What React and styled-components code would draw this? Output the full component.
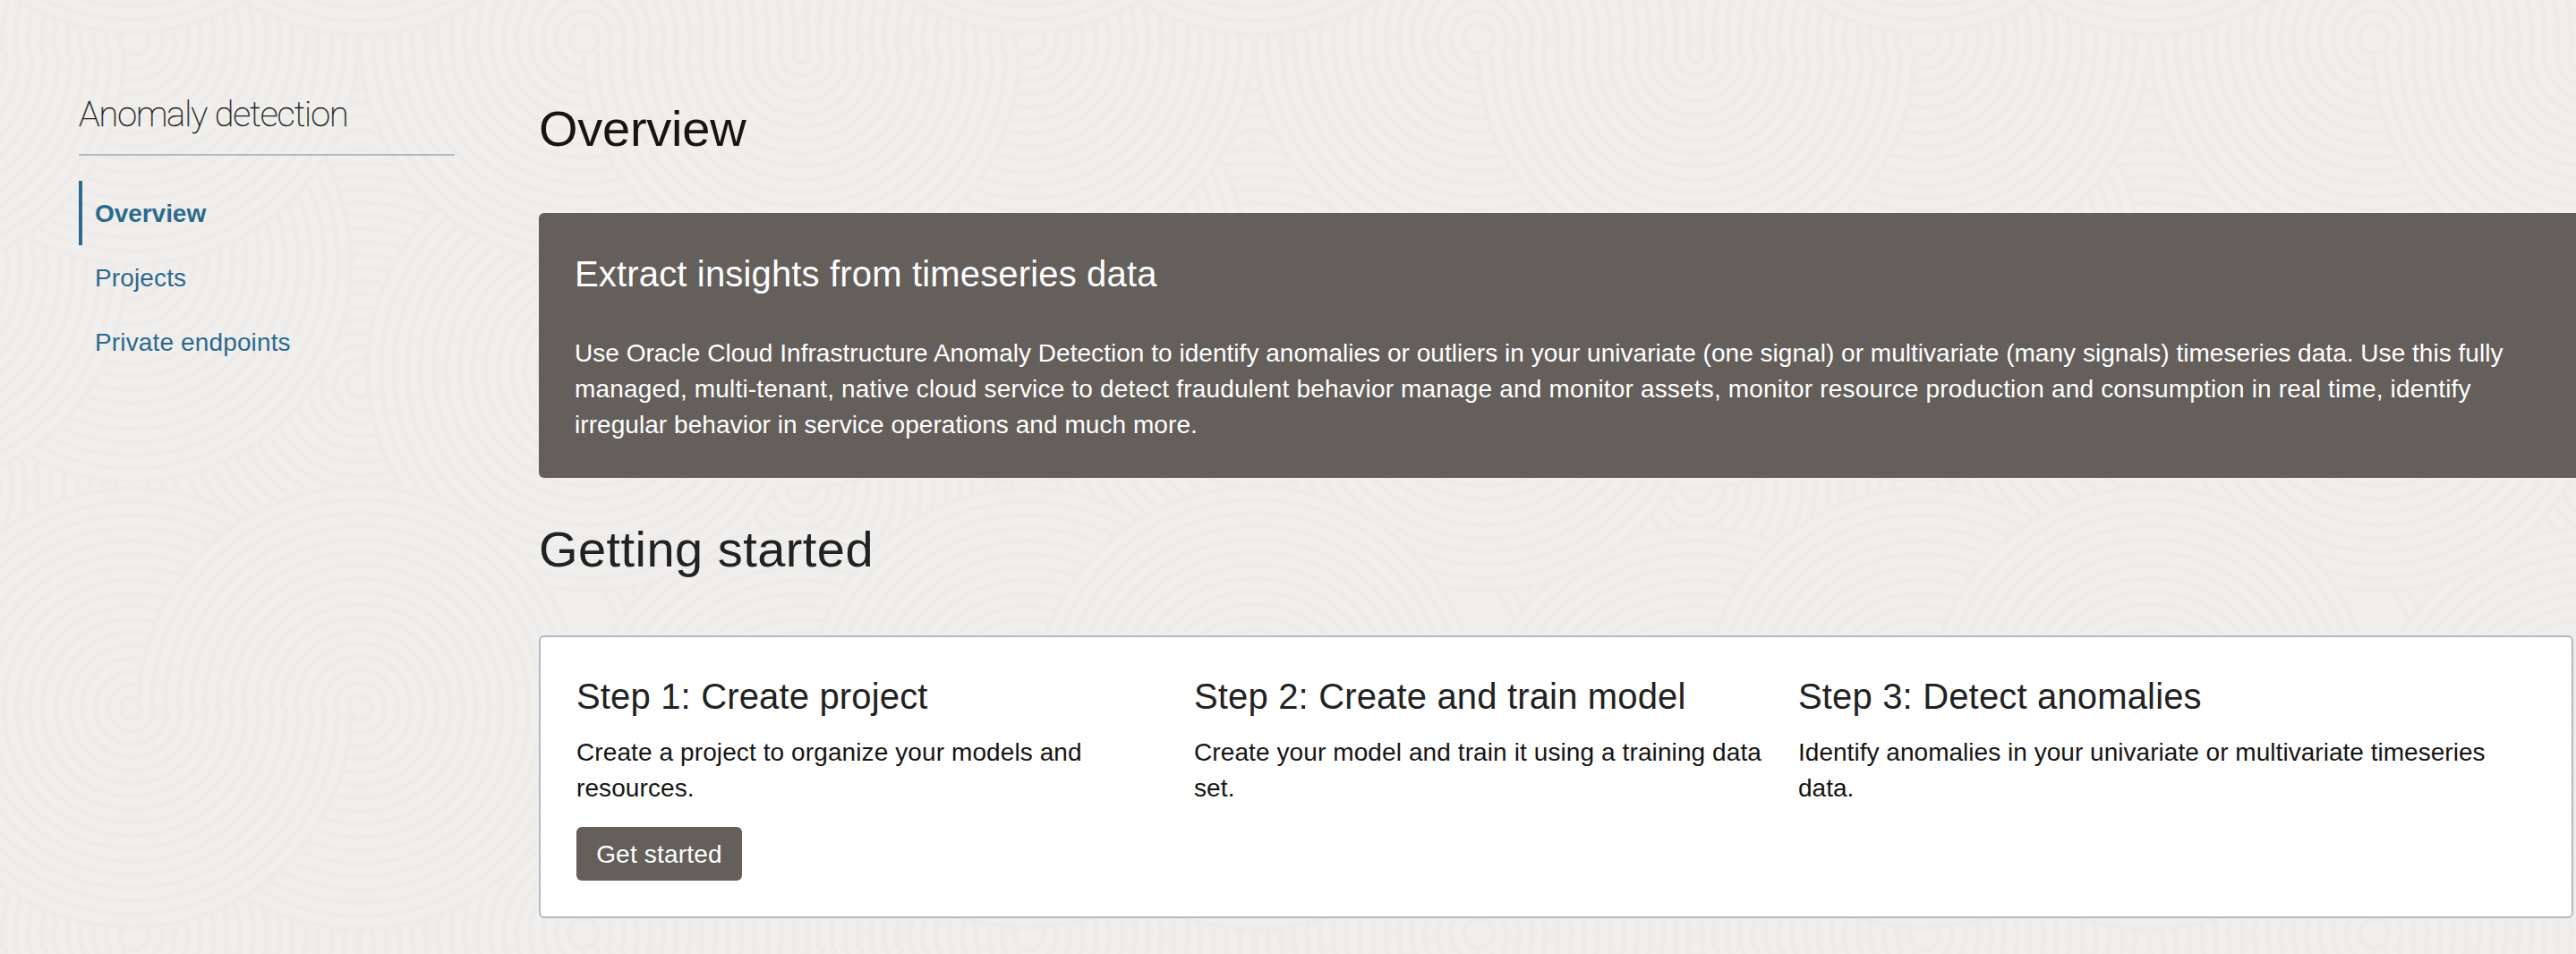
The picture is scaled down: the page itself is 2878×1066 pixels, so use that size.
import React from "react";
import styled, { createGlobalStyle } from "styled-components";

const TILE = 1000;
const PAPER = "#f0efed";

const GlobalStyle = createGlobalStyle`
  *, *::before, *::after { box-sizing: border-box; }
  body {
    margin: 0;
    background: ${PAPER};
    font-family: "Liberation Sans", Arial, sans-serif;
  }
`;

const Page = styled.div`
  position: relative;
  z-index: 0;
  display: flex;
  align-items: flex-start;
  gap: 94px;
  height: 1066px;
  padding-left: 88px;
  overflow: hidden;
`;

const Texture = styled.svg`
  position: absolute;
  inset: 0;
  z-index: -1;
  width: 100%;
  height: 100%;
`;

const Sidebar = styled.aside`
  flex: 0 0 420px;
  padding-top: 104px;
`;

const SidebarTitle = styled.h2`
  margin: 0 0 28px;
  padding-bottom: 20px;
  border-bottom: 2px solid #b5b9c3;
  color: #222;
  font: 100 39.5px/48px Roboto, sans-serif;
  letter-spacing: -1px;
  -webkit-text-stroke: 0.4px #222;
`;

const Nav = styled.nav`
  display: flex;
  flex-direction: column;
`;

const NavItem = styled.a`
  display: flex;
  align-items: center;
  height: 72px;
  padding: 2px 0 0 14px;
  border-left: 4px solid ${(p) => (p.$active ? "#2c6a8d" : "transparent")};
  color: #2c6a8d;
  font-size: 28px;
  font-weight: ${(p) => (p.$active ? 700 : 400)};
  letter-spacing: ${(p) => (p.$active ? "-0.05px" : "0.14px")};
  text-decoration: none;
`;

const Main = styled.main`
  flex: 1;
  min-width: 0;
  padding-top: 112px;
`;

const SectionHeading = styled.h1`
  margin: ${(p) => (p.$spaced ? "48px 0 64px" : "0 0 62px")};
  color: ${(p) => (p.$spaced ? "#222" : "#161513")};
  font-size: 56px;
  font-weight: 400;
  line-height: 64px;
  letter-spacing: ${(p) => (p.$spaced ? "0.45px" : "-0.25px")};
`;

const Banner = styled.section`
  padding: 44px 40px 39px;
  border-radius: 6px 0 0 6px;
  background: #645f5b;
  color: #fff;
`;

const CardTitle = styled.h3`
  margin: 0 0 ${(p) => p.$gap}px;
  font-size: 40px;
  font-weight: 400;
  line-height: 48px;
  letter-spacing: 0.16px;
`;

const Copy = styled.p`
  margin: 0;
  font-size: 28px;
  line-height: 40px;
  letter-spacing: ${(p) => p.$tracking ?? 0.1}px;
`;

const Line = styled.span`
  display: block;
  white-space: nowrap;
  letter-spacing: ${(p) => p.$tracking}px;
`;

const Steps = styled.section`
  display: grid;
  grid-template-columns: 690px 675px 1fr;
  margin-right: 3px;
  padding: 42px 40px 40px;
  border: 2px solid #b5b9c3;
  border-radius: 6px;
  background: #fff;
`;

const Step = styled.article`
  display: flex;
  flex-direction: column;
  align-items: flex-start;
  color: #222;

  ${Copy} { color: #161513; }
`;

const StartButton = styled.button`
  width: 185px;
  height: 60px;
  margin-top: 23px;
  padding: 1px 0 0;
  border: 0;
  border-radius: 6px;
  background: #645f5b;
  color: #fff;
  font: 400 28px "Liberation Sans", Arial, sans-serif;
  letter-spacing: 0.2px;
`;

// Overlapping discs of the background tile, lowest first.
// half: "bottom" draws only the lower half, so that neighbours interlock.
const DISCS = [
  { x: 402, y: 1180, r: 240 },
  { x: 402, y: 430, r: 262 },
  { x: 895, y: 545, r: 250 },
  { x: 895, y: 840, r: 250 },
  { x: 147, y: 293, r: 245 },
  { x: 895, y: 300, r: 245 },
  { x: 658, y: 413, r: 247 },
  { x: 150, y: 45, r: 250 },
  { x: 652, y: 43, r: 250 },
  { x: 895, y: 60, r: 243, half: "bottom" },
  { x: 147, y: 791, r: 245 },
  { x: 402, y: 791, r: 247 },
  { x: 147, y: 791, r: 245, half: "bottom" },
];

const RING_GAP = 14.6;

function Disc({ x, y, r, half }) {
  const radii = [];
  for (let k = r; k > 4; k -= RING_GAP) radii.push(k);
  return radii.map((k) =>
    half ? (
      <path key={k} d={`M${x - k} ${y}A${k} ${k} 0 0 0 ${x + k} ${y}`} />
    ) : (
      <circle key={k} cx={x} cy={y} r={k} />
    )
  );
}

function wrapped(disc) {
  const copies = [];
  for (const dx of [-TILE, 0, TILE])
    for (const dy of [-TILE, 0, TILE]) {
      const x = disc.x + dx;
      const y = disc.y + dy;
      const visible =
        x + disc.r > 0 && x - disc.r < TILE && y + disc.r > 0 && y - disc.r < TILE;
      if (visible) copies.push({ ...disc, x, y });
    }
  return copies;
}

function RakedSand() {
  return (
    <Texture aria-hidden="true">
      <defs>
        <pattern id="sand" width={TILE} height={TILE} patternUnits="userSpaceOnUse">
          <rect width={TILE} height={TILE} fill={PAPER} />
          <g fill={PAPER} stroke="#edecea" strokeWidth="5">
            {DISCS.flatMap(wrapped).map((d, i) => (
              <Disc key={i} {...d} />
            ))}
          </g>
        </pattern>
      </defs>
      <rect width="100%" height="100%" fill="url(#sand)" />
    </Texture>
  );
}

const NAV = ["Overview", "Projects", "Private endpoints"];

const INTRO = [
  [
    "Use Oracle Cloud Infrastructure Anomaly Detection to identify anomalies or outliers in your univariate (one signal) or multivariate (many signals) timeseries data. Use this fully",
    0.03,
  ],
  [
    "managed, multi-tenant, native cloud service to detect fraudulent behavior manage and monitor assets, monitor resource production and consumption in real time, identify",
    0.17,
  ],
  ["irregular behavior in service operations and much more.", 0.06],
];

const STEPS = [
  {
    title: "Step 1: Create project",
    text: "Create a project to organize your models and resources.",
    action: "Get started",
  },
  {
    title: "Step 2: Create and train model",
    text: "Create your model and train it using a training data set.",
  },
  {
    title: "Step 3: Detect anomalies",
    text: "Identify anomalies in your univariate or multivariate timeseries data.",
    tracking: 0.03,
  },
];

export default function App() {
  return (
    <>
      <GlobalStyle />
      <Page>
        <RakedSand />
        <Sidebar>
          <SidebarTitle>Anomaly detection</SidebarTitle>
          <Nav>
            {NAV.map((label, i) => (
              <NavItem key={label} $active={i === 0}>
                {label}
              </NavItem>
            ))}
          </Nav>
        </Sidebar>
        <Main>
          <SectionHeading>Overview</SectionHeading>
          <Banner>
            <CardTitle $gap={45}>Extract insights from timeseries data</CardTitle>
            <Copy>
              {INTRO.map(([text, tracking]) => (
                <Line key={text} $tracking={tracking}>
                  {text}
                </Line>
              ))}
            </Copy>
          </Banner>
          <SectionHeading as="h2" $spaced>
            Getting started
          </SectionHeading>
          <Steps>
            {STEPS.map((step) => (
              <Step key={step.title}>
                <CardTitle $gap={19}>{step.title}</CardTitle>
                <Copy $tracking={step.tracking}>{step.text}</Copy>
                {step.action && <StartButton>{step.action}</StartButton>}
              </Step>
            ))}
          </Steps>
        </Main>
      </Page>
    </>
  );
}
